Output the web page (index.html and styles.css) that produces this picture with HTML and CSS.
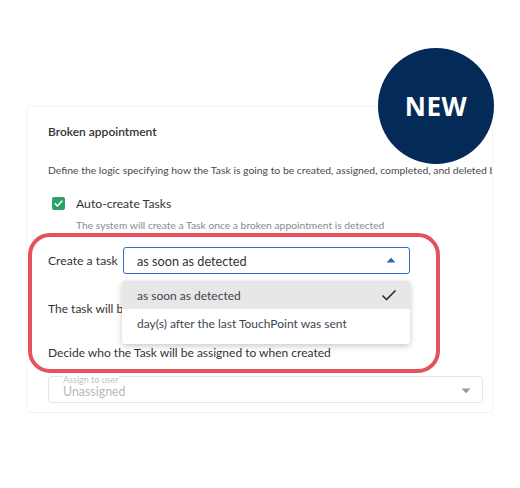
FILE: index.html
```html
<html>
<head>
  <title>Broken appointment</title>
  <link rel="stylesheet" href="styles.css">
</head>
<body>
  <div class="page">
    <section class="card">
      <h2 class="card-title">Broken appointment</h2>
      <p class="desc">Define the logic specifying how the Task is going to be created, assigned, completed, and deleted by the system</p>

      <label class="check-row">
        <span class="checkbox">
          <svg width="13" height="13" viewBox="0 0 13 13"><path d="M3.2 6.8 L5.4 9 L9.8 4.2" fill="none" stroke="#fff" stroke-width="1.6" stroke-linecap="round" stroke-linejoin="round"/></svg>
        </span>
        <span class="check-label">Auto-create Tasks</span>
      </label>
      <p class="hint">The system will create a Task once a broken appointment is detected</p>

      <div class="field-row">
        <span class="field-label">Create a task</span>
        <div class="select-wrap">
          <div class="select open">
            <span>as soon as detected</span>
            <svg class="caret" width="10" height="6" viewBox="0 0 10 6"><path d="M0.5 5.5 L5 0.8 L9.5 5.5 Z" fill="#2668bd"/></svg>
          </div>
          <ul class="menu">
            <li class="selected">as soon as detected
              <svg width="16" height="12" viewBox="0 0 16 12"><path d="M1.5 6.5 L5.5 10.5 L14.5 1.5" fill="none" stroke="#2b2f36" stroke-width="1.6"/></svg>
            </li>
            <li>day(s) after the last TouchPoint was sent</li>
          </ul>
        </div>
      </div>

      <p class="row-text">The task will be completed</p>
      <p class="row-text decide">Decide who the Task will be assigned to when created</p>

      <div class="assign">
        <span class="assign-label">Assign to user</span>
        <span class="assign-value">Unassigned</span>
        <svg class="caret-down" width="10" height="6" viewBox="0 0 10 6"><path d="M0.5 0.5 L5 5.2 L9.5 0.5 Z" fill="#9a9a9a"/></svg>
      </div>
    </section>

    <div class="highlight"></div>
    <div class="badge">NEW</div>
  </div>
</body>
</html>
```

FILE: styles.css
```css
body {
  margin: 0;
  background: #fff;
  font-family: Lato, "Open Sans", Arial, sans-serif;
  color: #333;
  overflow: hidden;
}
.page {
  position: relative;
  width: 520px;
  height: 488px;
  overflow: hidden;
}
p, h2, ul {
  margin: 0;
  padding: 0;
}

.card {
  box-sizing: border-box;
  margin: 106px 0 0 26px;
  width: 467px;
  border: 1px solid #f4f4f4;
  border-radius: 4px;
  padding: 17px 0 9px 21px;
  overflow: hidden;
}
.card-title {
  font-size: 12px;
  font-weight: 600;
  line-height: 16px;
  color: #333;
}
.desc {
  margin-top: 22px;
  font-size: 10.4px;
  line-height: 16px;
  color: #4a4a4a;
  white-space: nowrap;
}

.check-row {
  display: flex;
  align-items: center;
  height: 18px;
  margin-top: 16px;
  padding-left: 4px;
}
.checkbox {
  width: 13px;
  height: 13px;
  border-radius: 2px;
  background: #2ea264;
  display: flex;
}
.check-label {
  margin-left: 11px;
  font-size: 12.2px;
  color: #333;
}
.hint {
  margin-top: 6px;
  padding-left: 28px;
  font-size: 10.3px;
  line-height: 14px;
  color: #8a8a8a;
}

.field-row {
  display: flex;
  align-items: center;
  margin-top: 15px;
  height: 27px;
}
.field-label {
  flex-shrink: 0;
  width: 75px;
  font-size: 12.2px;
  white-space: nowrap;
}
.select-wrap {
  position: relative;
}
.select {
  box-sizing: border-box;
  width: 287px;
  height: 27px;
  border: 1px solid #2c70c6;
  border-radius: 3px;
  display: flex;
  align-items: center;
  justify-content: space-between;
  padding: 0 13px 0 13px;
  font-size: 12.7px;
  color: #333;
}
.caret {
  margin-bottom: 2px;
}
.menu {
  position: absolute;
  top: 34px;
  left: -1px;
  width: 288px;
  list-style: none;
  background: #fff;
  border-radius: 3px;
  padding-bottom: 7px;
  box-shadow: 0 2px 6px rgba(0, 0, 0, 0.22);
}
.menu li {
  height: 28px;
  display: flex;
  align-items: center;
  justify-content: space-between;
  padding: 0 13px 0 15px;
  font-size: 12px;
  color: #3d4551;
}
.menu li.selected {
  background: #e7e7e7;
  border-radius: 3px 3px 0 0;
}

.row-text {
  margin-top: 27px;
  font-size: 12px;
  line-height: 16px;
  white-space: nowrap;
}
.row-text.decide {
  margin-top: 28px;
}

.assign {
  position: relative;
  box-sizing: border-box;
  margin-top: 15px;
  width: 435px;
  height: 27px;
  border: 1px solid #e6e6e6;
  border-radius: 3px;
  padding: 0 11px 0 14px;
  display: flex;
  align-items: center;
  justify-content: space-between;
}
.assign-label {
  position: absolute;
  top: -3px;
  left: 14px;
  font-size: 9px;
  color: #c4c4c4;
  background: #fff;
}
.assign-value {
  margin-top: 4px;
  font-size: 12.4px;
  color: #b9b9b9;
}
.caret-down {
  margin-top: 2px;
}

.highlight {
  position: absolute;
  left: 28px;
  top: 233px;
  width: 404px;
  height: 132px;
  border: 4px solid #e5525c;
  border-radius: 22px;
}
.badge {
  position: absolute;
  left: 378px;
  top: 48px;
  width: 116px;
  height: 116px;
  border-radius: 50%;
  background: #042a57;
  color: #fff;
  font-family: "Open Sans", Arial, sans-serif;
  font-size: 26px;
  font-weight: 700;
  display: flex;
  align-items: center;
  justify-content: center;
  letter-spacing: 0.5px;
}
```
